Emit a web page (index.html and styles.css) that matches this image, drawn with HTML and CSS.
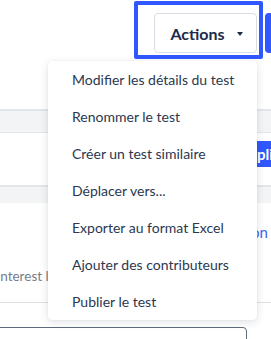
FILE: index.html
```html
<!DOCTYPE html>
<html lang="fr">
<head>
<meta charset="utf-8">
<link rel="stylesheet" href="styles.css">
</head>
<body>
<div class="page">
  <header class="topbar">
    <div class="focus-ring">
      <button class="btn-actions">Actions <span class="caret"></span></button>
    </div>
    <button class="btn-primary">Publier</button>
  </header>
  <div class="spacer"></div>
  <div class="band"></div>
  <div class="row-btn"><button class="btn-apply">Appliquer</button></div>
  <div class="band band-small"></div>
  <div class="row-link"><a class="link">Ajouter une description</a></div>
  <div class="row-meta"><span class="meta">interest level</span></div>
  <div class="divider"></div>
  <div class="input-box"></div>

  <ul class="menu">
    <li class="menu-item">Modifier les détails du test</li>
    <li class="menu-item">Renommer le test</li>
    <li class="menu-item">Créer un test similaire</li>
    <li class="menu-item">Déplacer vers...</li>
    <li class="menu-item">Exporter au format Excel</li>
    <li class="menu-item">Ajouter des contributeurs</li>
    <li class="menu-item">Publier le test</li>
  </ul>
</div>
</body>
</html>
```

FILE: styles.css
```css
* { box-sizing: border-box; }
html, body { margin: 0; padding: 0; background: #fff; }
body { font-family: Lato, "Liberation Sans", sans-serif; }

.page {
  position: relative;
  width: 271px;
  height: 339px;
  overflow: hidden;
  background: #fff;
}

.topbar {
  display: flex;
  align-items: flex-start;
  gap: 2px;
  padding: 1px 0 0 134px;
  width: 420px;
}

.focus-ring {
  border: 4px solid #3157ff;
  border-radius: 2px;
  padding: 8px 2px 2px 16px;
}

.btn-actions {
  display: flex;
  align-items: center;
  justify-content: center;
  gap: 12px;
  width: 103px;
  height: 40px;
  margin: 0;
  padding: 0 0 0 2px;
  border: 1px solid #d9dde3;
  border-radius: 4px;
  background: #fff;
  font-family: Lato, "Liberation Sans", sans-serif;
  font-weight: 700;
  font-size: 16px;
  color: #1c2a48;
}

.caret {
  width: 0;
  height: 0;
  border-left: 3px solid transparent;
  border-right: 3px solid transparent;
  border-top: 4px solid #1c2a48;
  margin-top: 1px;
}

.btn-primary {
  margin-top: 12px;
  height: 40px;
  width: 90px;
  border: 0;
  border-radius: 4px;
  background: #3157ff;
  color: #fff;
  font-family: Lato, "Liberation Sans", sans-serif;
  font-weight: 700;
  font-size: 15px;
}

.spacer { height: 50px; }

.band {
  height: 24px;
  background: #f3f4f6;
  border-top: 2px solid #e2e5e9;
  border-bottom: 1px solid #e4e7eb;
}
.band-small {
  height: 18px;
  border-bottom: 0;
}

.row-btn {
  height: 52px;
  padding: 8px 0 0 226px;
}

.btn-apply {
  height: 26px;
  width: 110px;
  margin: 0;
  padding: 0 0 0 12px;
  text-align: left;
  border: 0;
  border-radius: 4px;
  background: #3157ff;
  color: #fff;
  font-family: Lato, "Liberation Sans", sans-serif;
  font-weight: 700;
  font-size: 15px;
}

.row-link {
  padding: 19px 3px 0 0;
  text-align: right;
  line-height: 20px;
  height: 39px;
}
.link {
  font-size: 15px;
  color: #3d63f5;
}

.row-meta {
  padding-top: 23px;
  line-height: 20px;
  height: 60px;
}
.meta {
  display: inline-block;
  margin-left: -3px;
  font-size: 13.5px;
  color: #757c89;
}

.divider {
  height: 1px;
  background: #dde0e5;
}

.input-box {
  margin: 24px 0 0 -10px;
  width: 257px;
  height: 40px;
  border: 1.5px solid #5f6a7a;
  border-radius: 4px;
}

.menu {
  position: absolute;
  left: 48px;
  top: 61px;
  width: 209px;
  margin: 0;
  padding: 0;
  list-style: none;
  background: #fff;
  border-radius: 4px;
  box-shadow: 0 2px 8px rgba(30, 40, 60, 0.14), 0 0 1px rgba(30, 40, 60, 0.12);
}

.menu-item {
  height: 37px;
  line-height: 37px;
  padding-left: 24px;
  font-size: 14px;
  color: #2b3850;
  white-space: nowrap;
}
```
